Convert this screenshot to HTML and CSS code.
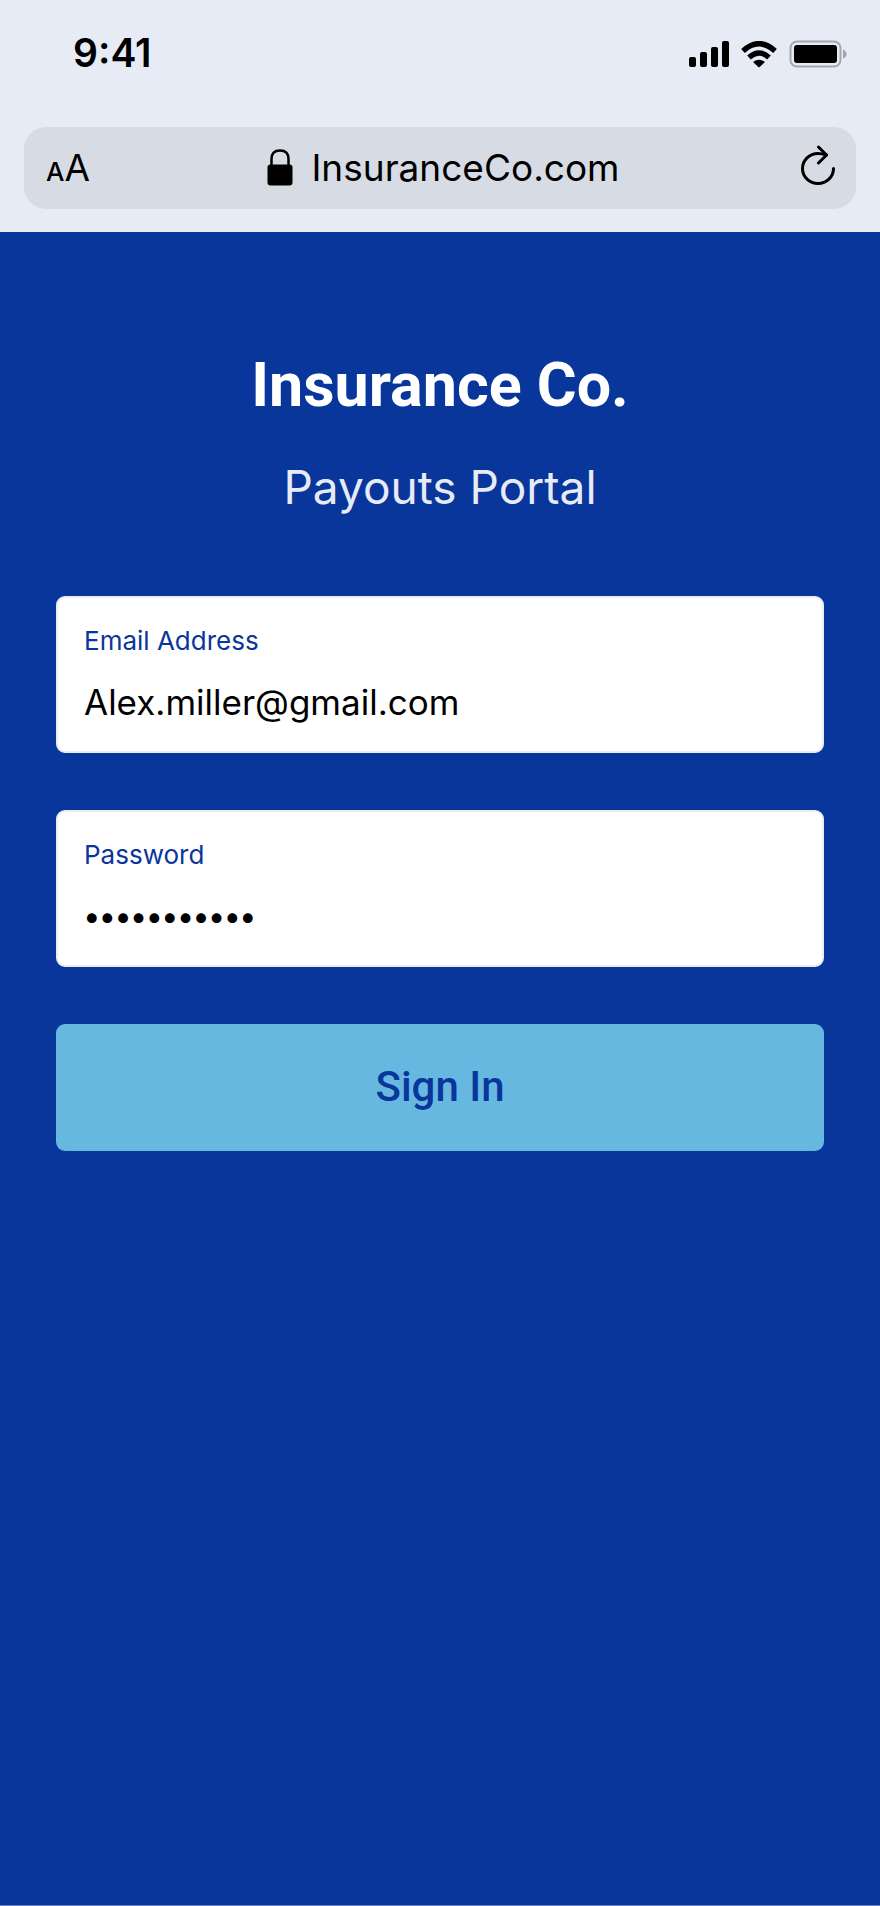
FILE: index.html
```html
<!DOCTYPE html>
<html lang="en">
<head>
<meta charset="utf-8">
<meta name="viewport" content="width=device-width, initial-scale=1">
<title>Insurance Co. Payouts Portal</title>
<link rel="stylesheet" href="styles.css">
</head>
<body>
<header class="browser">
  <div class="status">
    <time class="clock">9:41</time>
    <div class="indicators">
      <svg width="40" height="26" viewBox="0 0 40 26" role="img" aria-label="Signal">
        <rect x="0" y="16" width="7" height="10" rx="2"/>
        <rect x="11" y="11" width="7" height="15" rx="2"/>
        <rect x="22" y="6" width="7" height="20" rx="2"/>
        <rect x="33" y="0" width="7" height="26" rx="2"/>
      </svg>
      <svg width="36" height="27" viewBox="0 0 36 27" role="img" aria-label="Wi-Fi">
        <g fill="none" stroke="#000" stroke-width="5.500">
          <path d="M2 10Q18 -4.500 34 10"/>
          <path d="M8 16.500Q18 7.500 28 16.500"/>
        </g>
        <path d="M12 21Q18 16.500 24 21L18.700 26Q18 26.700 17.300 26Z"/>
      </svg>
      <svg width="58" height="28" viewBox="0 0 58 28" role="img" aria-label="Battery">
        <rect x="1.500" y="1.500" width="50" height="25" rx="6.500" fill="none" stroke="#a4a7b0" stroke-width="2"/>
        <rect x="5" y="5" width="43" height="18" rx="3"/>
        <path d="M54 9.500Q57.500 11 57.500 14T54 18.500Z" fill="#a0a3ab"/>
      </svg>
    </div>
  </div>
  <div class="address">
    <button class="tool" type="button" aria-label="Text size"><span class="small-a">A</span>A</button>
    <div class="site">
      <svg width="26" height="37" viewBox="0 0 26 37" aria-hidden="true">
        <path d="M4.500 17V10Q4.500 1.500 13 1.500T21.500 10V17" fill="none" stroke="#000" stroke-width="2.500"/>
        <rect x="0.500" y="15.500" width="25" height="21" rx="3"/>
      </svg>
      <span>InsuranceCo.com</span>
    </div>
    <button class="tool" type="button" aria-label="Reload">
      <svg width="38" height="44" viewBox="-4 0 38 44" fill="none" stroke="#000" stroke-width="3" stroke-linecap="round" stroke-linejoin="round">
        <path d="M32.500 23.500A15.500 15 0 1 1 17 8.500Q21 8.500 25.500 10"/>
        <path d="M17.500 2L25.500 10L17.500 18"/>
      </svg>
    </button>
  </div>
</header>
<main class="portal">
  <h1 class="brand">Insurance Co.</h1>
  <p class="tagline">Payouts Portal</p>
  <form class="login">
    <div class="field">
      <label class="label" for="email">Email Address</label>
      <input class="input" id="email" type="email" value="Alex.miller@gmail.com">
    </div>
    <div class="field">
      <label class="label" for="password">Password</label>
      <input class="input secret" id="password" type="password" value="password123">
    </div>
    <button class="submit" type="submit">Sign In</button>
  </form>
</main>
</body>
</html>
```

FILE: styles.css
```css
* { box-sizing: border-box; }

body {
  margin: 0;
  min-height: 100vh;
  display: flex;
  flex-direction: column;
  font-family: Inter, "Liberation Sans", sans-serif;
  color: #000;
  background: #09369b;
}

.browser {
  padding: 32px 24px 23px;
  background: #e6ebf6;
}

.status {
  display: flex;
  align-items: center;
  justify-content: space-between;
  height: 44px;
  margin-bottom: 51px;
  padding: 0 9px 0 49px;
}

.clock {
  padding-bottom: 4px;
  font-size: 39px;
  font-weight: 600;
}

.indicators {
  display: flex;
  align-items: center;
  gap: 12px;
}

.address {
  display: flex;
  align-items: center;
  justify-content: space-between;
  height: 82px;
  padding: 0 21px 2px 22px;
  border-radius: 22px;
  background: #d7dbe4;
}

.site {
  display: flex;
  align-items: center;
  gap: 18px;
  font-size: 37px;
}

.tool {
  display: flex;
  align-items: baseline;
  padding: 0;
  border: 0;
  background: none;
  color: #000;
  font: 37px Inter, sans-serif;
}

.small-a {
  font-size: 26px;
  font-weight: 500;
}

.portal {
  flex: 1;
  padding: 117px 56px;
  border-bottom: 1px solid #6f89c6;
}

.brand {
  margin: 0;
  font: 700 61px/72px Roboto, sans-serif;
  text-align: center;
  color: #fff;
}

.tagline {
  margin: 35px 0 78px;
  font-size: 46px;
  font-weight: 400;
  line-height: 62px;
  text-align: center;
  color: #e6ebf6;
}

.login {
  display: flex;
  flex-direction: column;
  gap: 57px;
}

.field {
  display: flex;
  flex-direction: column;
  gap: 20px;
  height: 157px;
  padding: 26px 26px 0;
  border: 2px solid #e9edf6;
  border-radius: 9px;
  background: #fff;
}

.label {
  font-size: 26px;
  line-height: 34px;
  color: #09369b;
}

.input {
  width: 100%;
  height: 48px;
  padding: 0;
  border: 0;
  outline: 0;
  background: none;
  color: #000;
  font: 35px/48px Inter, sans-serif;
}

.secret {
  font-size: 31px;
  font-weight: 600;
}

.submit {
  height: 127px;
  padding: 0 0 2px;
  border: 0;
  border-radius: 9px;
  background: #66b8e1;
  color: #09369b;
  font: 500 42px/52px Roboto, sans-serif;
}
```
